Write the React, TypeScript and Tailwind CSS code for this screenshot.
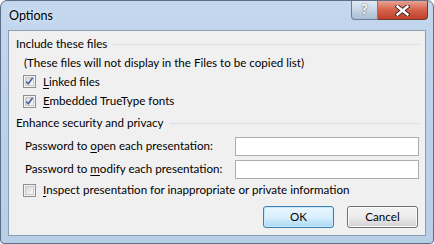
import type { ReactNode } from "react";

const font = { fontFamily: 'Lato, "Liberation Sans", sans-serif' };

function Check({ checked }: { checked?: boolean }) {
  return (
    <span className="flex size-[13px] shrink-0 items-center justify-center border border-[#8e8f8f] bg-[#f4f4f4]">
      <span className="flex size-[9px] items-center justify-center border border-[#c9cacb] bg-gradient-to-br from-[#d6d6d6] to-[#fbfbfb]">
        {checked && (
          <svg width="9" height="9" viewBox="0 0 9 9" className="overflow-visible">
            <path
              d="M1.2 4.6 L3.4 6.8 L7.6 0.8"
              fill="none"
              stroke="#4d61a3"
              strokeWidth="1.6"
            />
          </svg>
        )}
      </span>
    </span>
  );
}

function Key({ children }: { children: ReactNode }) {
  return <span className="underline underline-offset-2">{children}</span>;
}

function GroupLabel({ children }: { children: string }) {
  return (
    <div className="flex h-[20px] items-center gap-[6px] pl-[7px] pr-[6px]">
      <span>{children}</span>
      <span className="h-px flex-1 bg-[#d5dfe5]" />
    </div>
  );
}

function Button({ children, primary }: { children: ReactNode; primary?: boolean }) {
  return (
    <button
      className={
        primary
          ? "flex h-[22px] w-[71px] items-center justify-center rounded-[3px] border border-[#3c7fb1] bg-gradient-to-b from-[#eaf6fd] via-[#d9f0fc] to-[#a7d9f5] shadow-[inset_0_0_0_1px_#c5e9fb]"
          : "flex h-[22px] w-[71px] items-center justify-center rounded-[3px] border border-[#707070] bg-gradient-to-b from-[#f2f2f2] via-[#ebebeb] to-[#d1d1d1] shadow-[inset_0_0_0_1px_#fcfcfc]"
      }
    >
      {children}
    </button>
  );
}

export default function App() {
  return (
    <div className="h-[244px] w-[434px] whitespace-nowrap bg-white text-[11.6px] text-black" style={font}>
      <div className="relative flex size-full flex-col overflow-hidden rounded-t-[7px] rounded-b-[4px] border border-[#5b6e86] bg-gradient-to-b from-[#c3d7ee] via-[#bcd2ea] to-[#b8cfe8] px-[7px] pb-[7px]">
        <div className="flex h-[29px] items-start">
          <span className="mt-[6px] pl-[1px] text-[12.5px] [text-shadow:0_0_6px_#ffffff]">Options</span>
          <div className="ml-auto mr-[-2px] flex h-[19px]">
            <div className="flex w-[27px] items-center justify-center rounded-bl-[4px] border border-t-0 border-[#6b7d94] bg-gradient-to-b from-[#e2ebf4] via-[#c7d5e5] to-[#aabdd3] text-[13px] font-bold text-white [text-shadow:0_0_2px_#2a3d5a]">
              ?
            </div>
            <div className="flex w-[50px] items-center justify-center rounded-br-[4px] border border-t-0 border-l-0 border-[#6b3a33] bg-gradient-to-b from-[#e8a293] via-[#d5614b] to-[#c0402b]">
              <svg width="15" height="11" viewBox="0 0 15 11">
                <path
                  d="M2.5 1.5 L12.5 9.5 M12.5 1.5 L2.5 9.5"
                  stroke="#3d2420"
                  strokeWidth="4.2"
                  strokeLinecap="square"
                />
                <path
                  d="M2.5 1.5 L12.5 9.5 M12.5 1.5 L2.5 9.5"
                  stroke="#ffffff"
                  strokeWidth="2.4"
                  strokeLinecap="square"
                />
              </svg>
            </div>
          </div>
        </div>

        <div className="flex flex-1 flex-col border border-[#8c9db1] bg-[#f0f0f0] pt-[3px]">
          <GroupLabel>Include these files</GroupLabel>
          <div className="flex h-[18px] items-center pl-[15px]">
            (These files will not display in the Files to be copied list)
          </div>
          <label className="flex h-[19px] items-center gap-[7px] pl-[14px]">
            <Check checked />
            <span>
              <Key>L</Key>inked files
            </span>
          </label>
          <label className="flex h-[20px] items-center gap-[7px] pl-[14px]">
            <Check checked />
            <span>
              <Key>E</Key>mbedded TrueType fonts
            </span>
          </label>

          <div className="flex h-[23px] items-end pb-[1px]">
            <div className="w-full">
              <GroupLabel>Enhance security and privacy</GroupLabel>
            </div>
          </div>

          <div className="grid h-[24px] grid-cols-[210px_1fr] items-center pl-[16px] pr-[6px]">
            <span>
              Password to <Key>o</Key>pen each presentation:
            </span>
            <input className="h-[19px] border border-[#abadb3] bg-white outline-none" />
          </div>
          <div className="grid h-[22px] grid-cols-[210px_1fr] items-center pl-[16px] pr-[6px]">
            <span>
              Password to <Key>m</Key>odify each presentation:
            </span>
            <input className="h-[19px] border border-[#abadb3] bg-white outline-none" />
          </div>
          <label className="flex h-[20px] items-center gap-[7px] pl-[14px]">
            <Check />
            <span>
              <Key>I</Key>nspect presentation for inappropriate or private information
            </span>
          </label>

          <div className="mt-[6px] flex justify-end gap-[13px] pr-[7px]">
            <Button primary>OK</Button>
            <Button>Cancel</Button>
          </div>
        </div>
      </div>
    </div>
  );
}
